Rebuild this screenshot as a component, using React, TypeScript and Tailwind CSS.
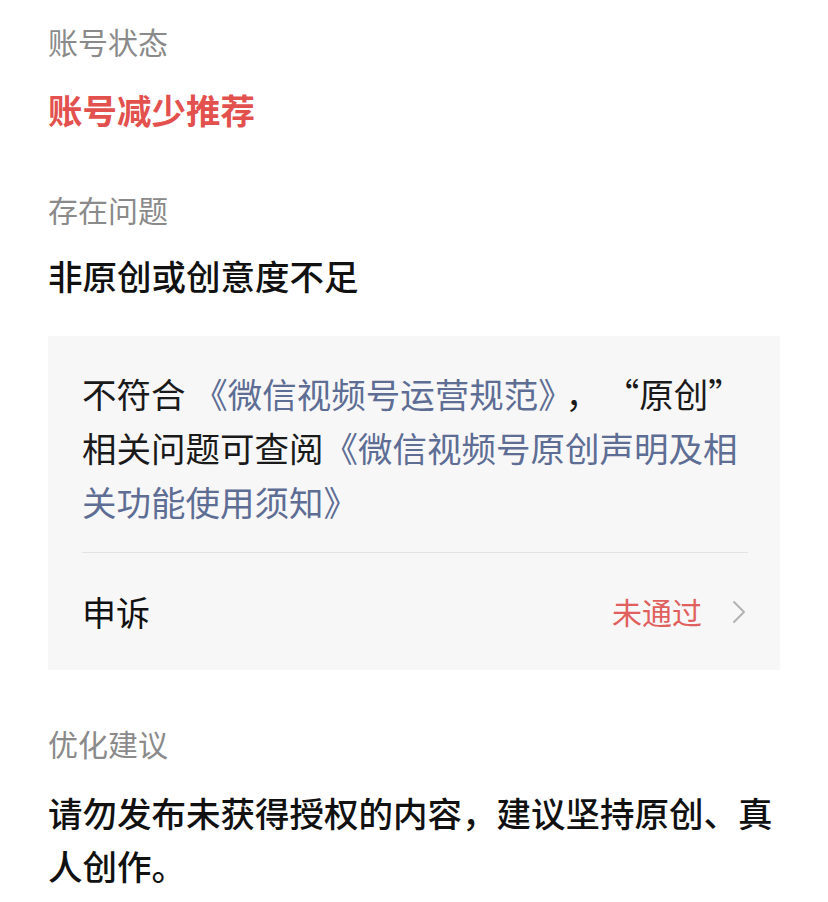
const font = "font-['Noto_Sans_CJK_SC','Noto_Sans',sans-serif]";

function Label({ children }: { children: React.ReactNode }) {
  return <div className="text-[30px] leading-[42px] text-[#8a8a8a]">{children}</div>;
}

export default function App() {
  return (
    <div className={`${font} min-h-[902px] bg-white px-12 pt-[20px] pb-6`}>
      {/* 账号状态 */}
      <Label>账号状态</Label>
      <div className="mt-[23px] text-[34.5px] leading-[48px] font-semibold text-[#e2514e]">
        账号减少推荐
      </div>

      {/* 存在问题 */}
      <div className="mt-[55px]">
        <Label>存在问题</Label>
      </div>
      <div className="mt-[21px] text-[34.5px] leading-[48px] font-medium text-[#111]">
        非原创或创意度不足
      </div>

      <div className="mt-[37px] bg-[#f7f7f7] pl-[34px] pr-8 pt-[30px]">
        <p className="text-[34.5px] leading-[54px] text-[#1a1a1a]">
          <span className="whitespace-nowrap">
            不符合 <span className="text-[#5d6d94]">《微信视频号运营规范》</span>
            <span className="ml-[10px]">，</span>
            <span className="ml-[22px]">“原创”</span>
          </span>
          <br />
          相关问题可查阅
          <span className="text-[#5d6d94]">《微信视频号原创声明及相关功能使用须知》</span>
        </p>
        <div className="mt-6 h-px bg-[#e3e3e3]" />
        <div className="flex h-[117px] items-center justify-between">
          <span className="text-[34px] text-[#111]">申诉</span>
          <div className="flex items-center gap-[30px]">
            <span className="text-[30px] text-[#e0605e]">未通过</span>
            <svg width="14" height="24" viewBox="0 0 14 24" fill="none" className="mr-[2px]">
              <path d="M2 2l10 10-10 10" stroke="#b3b3b3" strokeWidth="2" strokeLinecap="round" strokeLinejoin="round" />
            </svg>
          </div>
        </div>
      </div>

      {/* 优化建议 */}
      <div className="mt-[52px]">
        <Label>优化建议</Label>
      </div>
      <p className="mt-[22px] text-[34.5px] leading-[53px] font-medium text-[#111]">
        请勿发布未获得授权的内容，建议坚持原创、真人创作。
      </p>
    </div>
  );
}
